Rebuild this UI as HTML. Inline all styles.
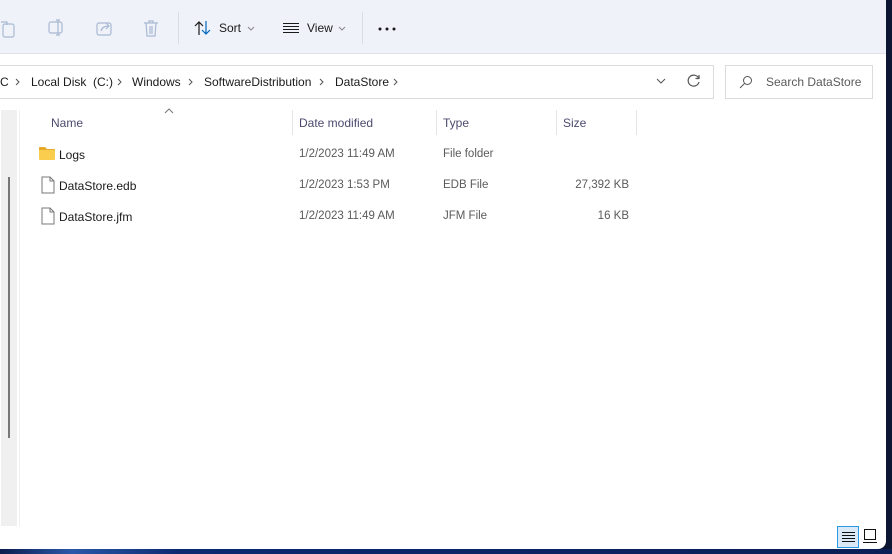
<!DOCTYPE html>
<html><head><meta charset="utf-8"><style>
*{margin:0;padding:0;box-sizing:border-box}
body{width:892px;height:554px;overflow:hidden;background:#0b1633;font-family:"Liberation Sans",sans-serif;position:relative}
.win{position:absolute;left:0;top:0;width:886px;height:549px;background:#fff;border-bottom-right-radius:8px;overflow:hidden}
.tb{position:absolute;left:0;top:0;width:886px;height:54px;background:#eff2f9;border-bottom:1px solid #e1e3ea}
.t{position:absolute;font-size:12px;color:#1a1a1a;white-space:nowrap}
.g{color:#5a5a5a;font-size:11.5px}
.h{color:#4c4a6e}
.sep{position:absolute;top:12px;width:1px;height:32px;background:#dadde4}
.box{position:absolute;border:1px solid #dcdcdc;background:#fff}
</style></head><body>
<div class="win">
<div class="tb">
<svg style="position:absolute;left:0;top:18px" width="170" height="22" fill="none" stroke="#a9b9d3" stroke-width="1.2">
<rect x="3" y="6" width="11" height="13" rx="2"/><path d="M1 4h6v3"/>
<rect x="49" y="4" width="13" height="11" rx="2"/><path d="M58 2v15M56 2h4M56 17h4"/>
<rect x="97" y="5" width="14" height="12" rx="2"/><path d="M101 13c1-4 4-5 8-5M106 5l3 3-3 3"/>
<path d="M144 5h14M146 5l1 13h8l1-13M149 5V3h4v2M150 8v8M152 8v8"/>
</svg>
<div class="sep" style="left:178px"></div>
<svg style="position:absolute;left:194px;top:20px" width="18" height="16" fill="none" stroke="#1a1a1a" stroke-width="1.2"><path d="M5 15V2M1 6l4-4 4 4"/><path stroke="#0067c0" d="M12 1v13M8 10l4 4 4-4"/></svg>
<div class="t" style="left:219px;top:21px">Sort</div>
<svg style="position:absolute;left:283px;top:22px" width="16" height="12" stroke="#1a1a1a" stroke-width="1"><path d="M0 1.5h16M0 4.5h16M0 7.5h16M0 10.5h16"/></svg>
<div class="t" style="left:307px;top:21px">View</div>
<svg style="position:absolute;left:247px;top:26px" width="100" height="5" fill="none" stroke="#888"><path d="M1 1l3 3 3-3M92 1l3 3 3-3"/></svg>
<div class="sep" style="left:362px"></div>
<svg style="position:absolute;left:378px;top:27px" width="20" height="4" fill="#1a1a1a"><circle cx="2" cy="2" r="1.5"/><circle cx="9" cy="2" r="1.5"/><circle cx="16" cy="2" r="1.5"/></svg>
</div>
<div class="box" style="left:-2px;top:65px;width:716px;height:34px"></div>
<div class="t" style="left:0;top:75px">C</div>
<div class="t" style="left:31px;top:75px">Local Disk&nbsp; (C:)</div>
<div class="t" style="left:132px;top:75px">Windows</div>
<div class="t" style="left:204px;top:75px">SoftwareDistribution</div>
<div class="t" style="left:335px;top:75px">DataStore</div>
<svg style="position:absolute;left:0;top:77px" width="410" height="10" fill="none" stroke="#555" stroke-width="1"><path d="M16 2l3 3-3 3M118 2l3 3-3 3M189 2l3 3-3 3M320 2l3 3-3 3M394 2l3 3-3 3"/></svg>
<svg style="position:absolute;left:656px;top:78px" width="10" height="6" fill="none" stroke="#555"><path d="M1 1l4 4 4-4"/></svg>
<svg style="position:absolute;left:687px;top:74px" width="14" height="14" fill="none" stroke="#555" stroke-width="1.2"><path d="M11.5 4A5.5 5.5 0 1 0 12 8"/><path d="M12 1v3.5H8.5"/></svg>
<div class="box" style="left:725px;top:65px;width:148px;height:34px"></div>
<svg style="position:absolute;left:739px;top:75px" width="14" height="14" fill="none" stroke="#555" stroke-width="1"><circle cx="8.5" cy="5.5" r="4"/><path d="M5.5 8.5L1 13"/></svg>
<div class="t" style="left:766px;top:75px;color:#5a5a5a">Search DataStore</div>
<div style="position:absolute;left:1px;top:110px;width:16px;height:416px;background:#f0f0f0"></div>
<div style="position:absolute;left:8px;top:177px;width:2px;height:261px;background:#777"></div>
<div style="position:absolute;left:19px;top:110px;width:1px;height:416px;background:#f0f0f0"></div>
<svg style="position:absolute;left:164px;top:108px" width="10" height="6" fill="none" stroke="#777"><path d="M1 5l4-4 4 4"/></svg>
<div class="t h" style="left:51px;top:116px">Name</div>
<div class="t h" style="left:299px;top:116px">Date modified</div>
<div class="t h" style="left:443px;top:116px">Type</div>
<div class="t h" style="left:563px;top:116px">Size</div>
<div style="position:absolute;left:292px;top:110px;width:1px;height:25px;background:#e5e5e5"></div>
<div style="position:absolute;left:436px;top:110px;width:1px;height:25px;background:#e5e5e5"></div>
<div style="position:absolute;left:556px;top:110px;width:1px;height:25px;background:#e5e5e5"></div>
<div style="position:absolute;left:636px;top:110px;width:1px;height:25px;background:#e5e5e5"></div>
<svg style="position:absolute;left:39px;top:146px" width="16" height="14"><path d="M0 1.5Q0 1 1 1h5l2 2h7q1 0 1 1v1H0z" fill="#e6a92a"/><rect x="0" y="4" width="16" height="10" rx="1" fill="#fbcd4e"/></svg>
<svg style="position:absolute;left:41px;top:176px" width="14" height="18" fill="#fff" stroke="#777"><path d="M1 1h8l4 4v12H1z M9 1v4h4"/></svg>
<svg style="position:absolute;left:41px;top:207px" width="14" height="18" fill="#fff" stroke="#777"><path d="M1 1h8l4 4v12H1z M9 1v4h4"/></svg>
<div class="t" style="left:59px;top:148px">Logs</div>
<div class="t" style="left:59px;top:179px">DataStore.edb</div>
<div class="t" style="left:59px;top:210px">DataStore.jfm</div>
<div class="t g" style="left:299px;top:148px">1/2/2023 11:49 AM</div>
<div class="t g" style="left:299px;top:179px">1/2/2023 1:53 PM</div>
<div class="t g" style="left:299px;top:210px">1/2/2023 11:49 AM</div>
<div class="t g" style="left:443px;top:148px">File folder</div>
<div class="t g" style="left:443px;top:179px">EDB File</div>
<div class="t g" style="left:443px;top:210px">JFM File</div>
<div class="t g" style="left:560px;top:179px;width:69px;text-align:right">27,392 KB</div>
<div class="t g" style="left:560px;top:210px;width:69px;text-align:right">16 KB</div>
<div style="position:absolute;left:837px;top:526px;width:22px;height:22px;background:#dbe9f7;border:1px solid #2b9ae6"></div>
<svg style="position:absolute;left:842px;top:531px" width="13" height="12" stroke="#111"><path d="M0 1.5h13M0 4.5h13M0 7.5h13M0 10.5h13"/></svg>
<svg style="position:absolute;left:863px;top:529px" width="14" height="14" fill="none" stroke="#111"><rect x="1.5" y="0.5" width="11" height="10"/><path d="M0 13.5h14"/></svg>
</div>
<div style="position:absolute;left:0;top:549px;width:892px;height:5px;background:linear-gradient(90deg,#0a1d4d,#2a58a8 8%,#0b2a70 20%,#0a1f55)"></div>
</body></html>
